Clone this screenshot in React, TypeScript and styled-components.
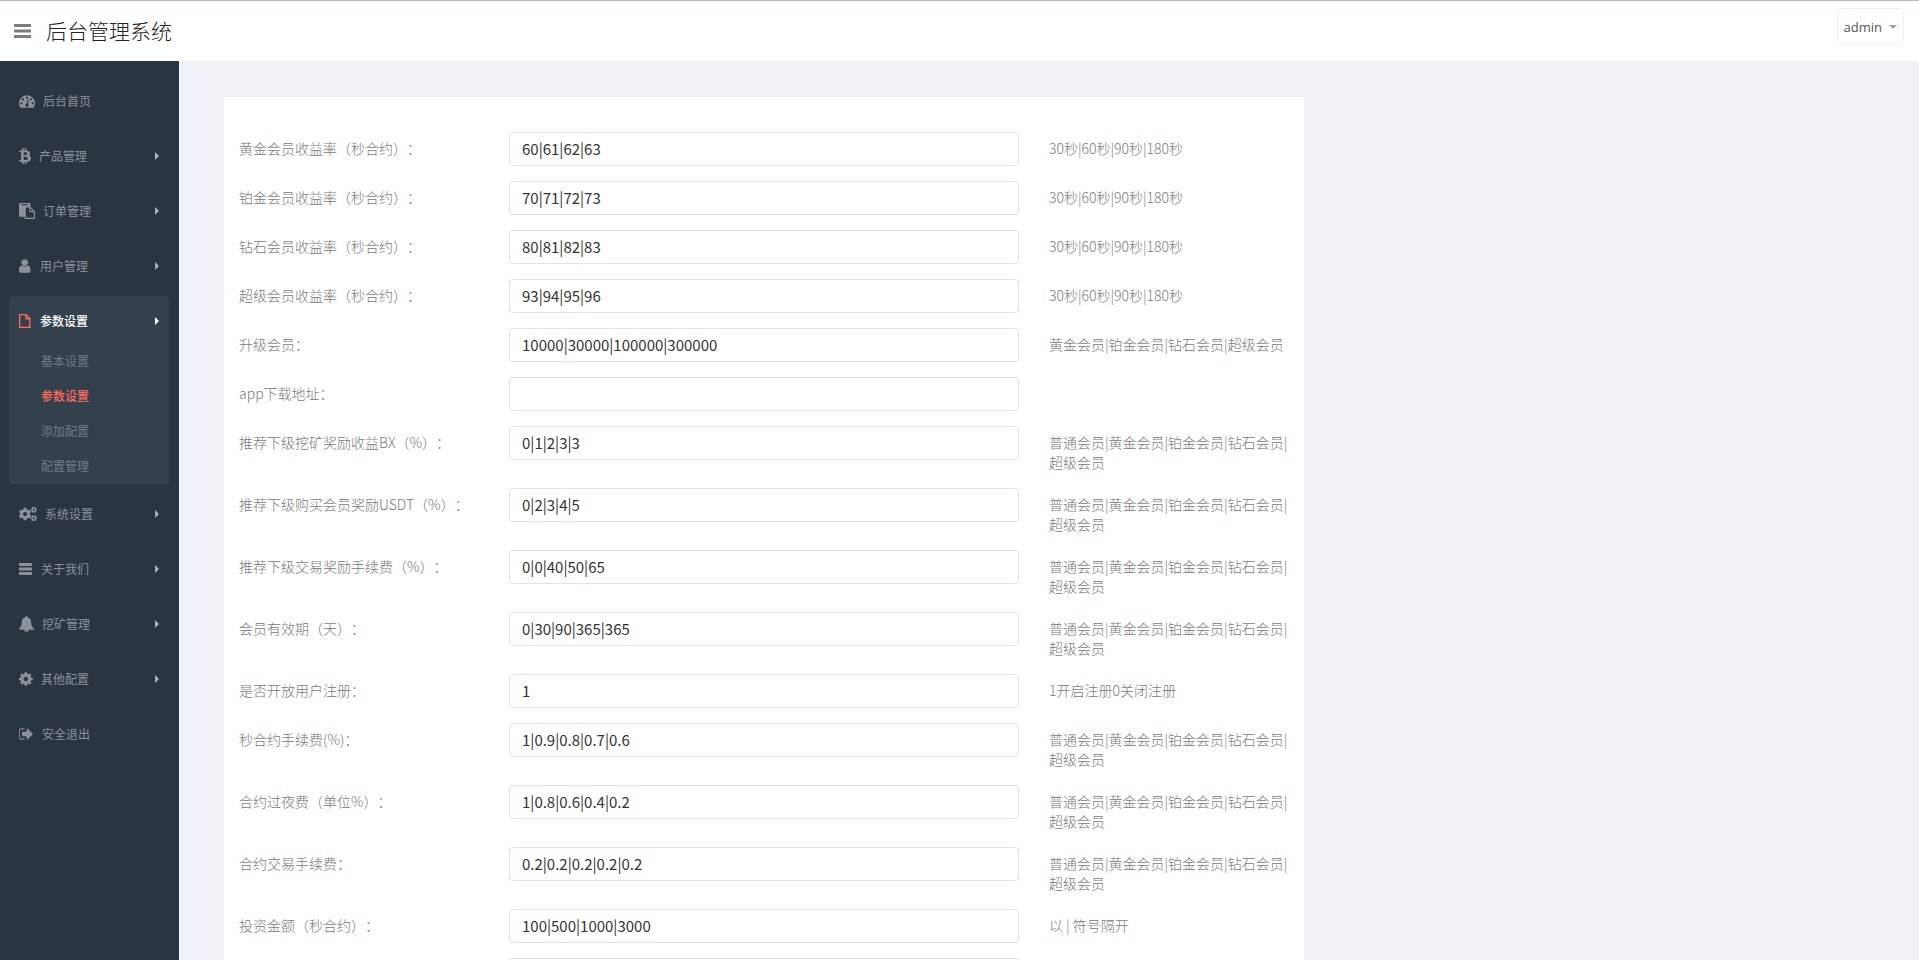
import React from "react";
import styled, { createGlobalStyle, css } from "styled-components";
import { FaBtc, FaCogs } from "react-icons/fa";

const cjk = `"Noto Sans CJK SC", sans-serif`;

const GlobalStyle = createGlobalStyle`
  *, *::before, *::after { box-sizing: border-box; }
  html, body { margin: 0; padding: 0; }
  body {
    background: #f1f2f7;
    color: #797979;
    font-family: ${cjk};
    font-size: 14px;
    line-height: 20px;
    text-spacing-trim: space-all;
  }
  ul { list-style: none; margin: 0; padding: 0; }
  a { color: inherit; text-decoration: none; }
  button { font: inherit; cursor: pointer; }
`;

const Shell = styled.div`
  height: 100vh;
  display: flex;
  flex-direction: column;
`;

const Header = styled.header`
  flex: none;
  height: 61px;
  display: flex;
  align-items: center;
  padding: 0 15px 0 14px;
  background: #fff;
  border-top: 1px solid #bdb5b9;
`;

const MenuButton = styled.button`
  display: flex;
  padding: 0;
  border: 0;
  background: none;
  color: #7c7c7c;
`;

const Brand = styled.a`
  margin-left: 15px;
  padding-bottom: 2px;
  font-size: 21px;
  line-height: 30px;
  font-weight: 300;
  color: #222;
`;

const AccountButton = styled.button`
  align-self: flex-start;
  display: flex;
  align-items: center;
  gap: 7px;
  height: 37px;
  margin: 7px 0 0 auto;
  padding: 0 6px;
  border: 1px solid #f3f3f5;
  border-radius: 4px;
  background: #fff;
  color: #555;
  font-family: "Open Sans", "Noto Sans", sans-serif;
  font-size: 13px;
`;

const Body = styled.div`
  flex: 1;
  min-height: 0;
  display: flex;
`;

const Sidebar = styled.nav`
  flex: none;
  width: 179px;
  padding: 15px 10px 0 9px;
  background: #2a3542;
  font-size: 12px;
`;

const MenuItem = styled.li<{ $open?: boolean }>`
  margin-bottom: 5px;
  border-radius: 4px;
  color: #8b929c;
  ${(p) => p.$open && css`background: #35404d;`}
`;

const MenuLink = styled.a<{ $open?: boolean }>`
  display: flex;
  align-items: center;
  gap: 8px;
  height: 50px;
  padding: 0 10px;
  ${(p) => p.$open && css`
    color: #fff;
    font-weight: 500;
    & > svg:first-child { color: #ff6c60; }
  `}
`;

const BitcoinIcon = styled(FaBtc)`
  width: 12px;
  height: 16px;
`;

const CogsIcon = styled(FaCogs)`
  width: 18px;
  height: 16px;
`;

const Arrow = styled.svg`
  margin-left: auto;
  color: #aeb2b7;
  ${MenuItem} a[aria-expanded="true"] & { color: #fff; }
`;

const SubMenu = styled.ul`
  margin-top: -3px;
  padding-bottom: 1px;
`;

const SubLink = styled.a<{ $active?: boolean }>`
  display: flex;
  align-items: center;
  height: 35px;
  padding-left: 32px;
  color: ${(p) => (p.$active ? "#ff6c60" : "#6f7a85")};
  font-weight: ${(p) => (p.$active ? 500 : 400)};
`;

const Main = styled.main`
  flex: 1;
  min-width: 0;
  overflow-y: auto;
  scrollbar-width: none;
  display: grid;
  grid-template-columns: repeat(12, minmax(0, 1fr));
  column-gap: 30px;
  align-items: start;
  padding: 36px 60px 36px 45px;
`;

const Panel = styled.form`
  grid-column: span 8;
  padding: 35px 0 20px;
  background: #fff;
`;

const Row = styled.div`
  display: grid;
  grid-template-columns: 1fr 2fr 1fr;
  align-items: start;
  margin-bottom: 15px;
`;

const Label = styled.label`
  padding: 6px 15px 1px;
  font-weight: 300;
`;

const Field = styled.div`
  display: flex;
  padding: 0 15px;
`;

const TextInput = styled.input`
  width: 100%;
  min-width: 0;
  height: 34px;
  padding: 0 12px 2px;
  border: 1px solid #e2e2e4;
  border-radius: 4px;
  background: #fff;
  color: #333;
  font-family: ${cjk};
  font-size: 15px;
  outline: none;
`;

const Hint = styled.p`
  margin: 0;
  padding: 6px 15px 1px;
  font-weight: 300;
`;

type GlyphProps = { d: string; x?: number; width: number };

const Glyph = ({ d, x = 0, width }: GlyphProps) => (
  <svg width={width} height={16} viewBox={`${x} 0 ${width * 112} 1792`} fill="currentColor" aria-hidden="true">
    <path d={d} />
  </svg>
);

const paths = {
  gauge:
    "M384 1152q0-53-37.5-90.5t-90.5-37.5-90.5 37.5-37.5 90.5 37.5 90.5 90.5 37.5 90.5-37.5 37.5-90.5zm192-448q0-53-37.5-90.5t-90.5-37.5-90.5 37.5-37.5 90.5 37.5 90.5 90.5 37.5 90.5-37.5 37.5-90.5zm428 481l101-382q6-26-7.5-48.5t-38.5-29.5-48 6.5-30 39.5l-101 382q-60 5-107 43.5t-63 98.5q-20 77 20 146t117 89 146-20 89-117q16-60-6-117t-72-91zm660-33q0-53-37.5-90.5t-90.5-37.5-90.5 37.5-37.5 90.5 37.5 90.5 90.5 37.5 90.5-37.5 37.5-90.5zm-640-640q0-53-37.5-90.5t-90.5-37.5-90.5 37.5-37.5 90.5 37.5 90.5 90.5 37.5 90.5-37.5 37.5-90.5zm448 192q0-53-37.5-90.5t-90.5-37.5-90.5 37.5-37.5 90.5 37.5 90.5 90.5 37.5 90.5-37.5 37.5-90.5zm320 448q0 261-141 483-19 29-54 29h-1402q-35 0-54-29-141-221-141-483 0-182 71-348t191-286 286-191 348-71 348 71 286 191 191 286 71 348z",
  paste:
    "M768 1664h896v-640h-416q-40 0-68-28t-28-68v-416h-384v1152zm256-1440v-64q0-13-9.5-22.5t-22.5-9.5h-704q-13 0-22.5 9.5t-9.5 22.5v64q0 13 9.5 22.5t22.5 9.5h704q13 0 22.5-9.5t9.5-22.5zm256 672h299l-299-299v299zm512 128v672q0 40-28 68t-68 28h-960q-40 0-68-28t-28-68v-160h-544q-40 0-68-28t-28-68v-1344q0-40 28-68t68-28h1088q40 0 68 28t28 68v328q21 13 36 28l408 408q28 28 48 76t20 88z",
  user:
    "M1536 1399q0 109-62.5 187t-150.5 78h-854q-88 0-150.5-78t-62.5-187q0-85 8.5-160.5t31.5-152 58.5-131 94-89 134.5-34.5q131 128 313 128t313-128q76 0 134.5 34.5t94 89 58.5 131 31.5 152 8.5 160.5zm-256-887q0 159-112.5 271.5t-271.5 112.5-271.5-112.5-112.5-271.5 112.5-271.5 271.5-112.5 271.5 112.5 112.5 271.5z",
  bell:
    "M912 1696q0-16-16-16-59 0-101.5-42.5t-42.5-101.5q0-16-16-16t-16 16q0 73 51.5 124.5t124.5 51.5q16 0 16-16zm816-288q0 52-38 90t-90 38h-448q0 106-75 181t-181 75-181-75-75-181h-448q-52 0-90-38t-38-90q50-42 91-88t85-119.5 74.5-158.5 50-206 19.5-260q0-152 117-282.5t307-158.5q-8-19-8-39 0-40 28-68t68-28 68 28 28 68q0 20-8 39 190 28 307 158.5t117 282.5q0 139 19.5 260t50 206 74.5 158.5 85 119.5 91 88z",
  cog:
    "M1152 896q0-106-75-181t-181-75-181 75-75 181 75 181 181 75 181-75 75-181zm512-109v222q0 12-8 23t-20 13l-185 28q-19 54-39 91 35 50 107 138 10 12 10 25t-9 23q-27 37-99 108t-94 71q-12 0-26-9l-138-108q-44 23-91 38-16 136-29 186-7 28-36 28h-222q-14 0-24.5-8.5t-11.5-21.5l-28-184q-49-16-90-37l-141 107q-10 9-25 9-14 0-25-11-126-114-165-168-7-10-7-23 0-12 8-23 15-21 51-66.5t54-70.5q-27-50-41-99l-183-27q-13-2-21-12.5t-8-23.5v-222q0-12 8-23t19-13l186-28q14-46 39-92-40-57-107-138-10-12-10-24 0-10 9-23 26-36 98.5-107.5t94.5-71.5q13 0 26 10l138 107q44-23 91-38 16-136 29-186 7-28 36-28h222q14 0 24.5 8.5t11.5 21.5l28 184q49 16 90 37l142-107q9-9 24-9 13 0 25 10 129 119 165 170 7 8 7 22 0 12-8 23-15 21-51 66.5t-54 70.5q26 50 41 98l183 28q13 2 21 12.5t8 23.5z",
  exit:
    "M704 1440q0 4 1 20t.5 26.5-3 23.5-10 19.5-20.5 6.5h-320q-119 0-203.5-84.5t-84.5-203.5v-704q0-119 84.5-203.5t203.5-84.5h320q13 0 22.5 9.5t9.5 22.5q0 4 1 20t.5 26.5-3 23.5-10 19.5-20.5 6.5h-320q-66 0-113 47t-47 113v704q0 66 47 113t113 47h312l11.5 1 11.5 3 8 5.5 7 9 2 13.5zm928-544q0 26-19 45l-544 544q-19 19-45 19t-45-19-19-45v-288h-448q-26 0-45-19t-19-45v-384q0-26 19-45t45-19h448v-288q0-26 19-45t45-19 45 19l544 544q19 19 19 45z",
};

const Bars = ({ width, height, box = width }: { width: number; height: number; box?: number }) => (
  <svg width={box} height={height} viewBox={`0 0 ${box} ${height}`} fill="currentColor" aria-hidden="true">
    {[0, 1, 2].map((i) => (
      <rect key={i} y={(i * (height - 3)) / 2} width={width} height="3" rx="0.5" />
    ))}
  </svg>
);

const FileOutline = () => (
  <svg width="13" height="14" viewBox="0 0 13 14" fill="none" stroke="currentColor" strokeWidth="1.3" aria-hidden="true">
    <path d="M.65 .65h6.4l3.8 3.8v8.9H.65z" />
    <path d="M6.9 .65v4.1h4" />
  </svg>
);

type Item = { text: string; icon: React.ReactNode; leaf?: boolean; children?: string[] };

const menu: Item[] = [
  { text: "后台首页", leaf: true, icon: <Glyph d={paths.gauge} width={16} /> },
  { text: "产品管理", icon: <BitcoinIcon /> },
  { text: "订单管理", icon: <Glyph d={paths.paste} width={16} /> },
  { text: "用户管理", icon: <Glyph d={paths.user} x={256} width={13} /> },
  {
    text: "参数设置",
    icon: <FileOutline />,
    children: ["基本设置", "参数设置", "添加配置", "配置管理"],
  },
  { text: "系统设置", icon: <CogsIcon /> },
  { text: "关于我们", icon: <Bars width={13} height={12} box={14} /> },
  { text: "挖矿管理", icon: <Glyph d={paths.bell} x={64} width={15} /> },
  { text: "其他配置", icon: <Glyph d={paths.cog} x={128} width={14} /> },
  { text: "安全退出", leaf: true, icon: <Glyph d={paths.exit} x={96} width={15} /> },
];

const levels = "普通会员|黄金会员|铂金会员|钻石会员|超级会员";
const seconds = "30秒|60秒|90秒|180秒";

const rows: [string, string, string][] = [
  ["黄金会员收益率（秒合约）：", "60|61|62|63", seconds],
  ["铂金会员收益率（秒合约）：", "70|71|72|73", seconds],
  ["钻石会员收益率（秒合约）：", "80|81|82|83", seconds],
  ["超级会员收益率（秒合约）：", "93|94|95|96", seconds],
  ["升级会员：", "10000|30000|100000|300000", "黄金会员|铂金会员|钻石会员|超级会员"],
  ["app下载地址：", "", ""],
  ["推荐下级挖矿奖励收益BX（%）：", "0|1|2|3|3", levels],
  ["推荐下级购买会员奖励USDT（%）：", "0|2|3|4|5", levels],
  ["推荐下级交易奖励手续费（%）：", "0|0|40|50|65", levels],
  ["会员有效期（天）：", "0|30|90|365|365", levels],
  ["是否开放用户注册：", "1", "1开启注册0关闭注册"],
  ["秒合约手续费(%)：", "1|0.9|0.8|0.7|0.6", levels],
  ["合约过夜费（单位%）：", "1|0.8|0.6|0.4|0.2", levels],
  ["合约交易手续费：", "0.2|0.2|0.2|0.2|0.2", levels],
  ["投资金额（秒合约）：", "100|500|1000|3000", "以 | 符号隔开"],
  ["", "", ""],
];

export default function App() {
  return (
    <Shell>
      <GlobalStyle />
      <Header>
        <MenuButton type="button" aria-label="菜单">
          <Bars width={17} height={14} />
        </MenuButton>
        <Brand href="#">后台管理系统</Brand>
        <AccountButton type="button">
          admin
          <svg width="8" height="4" viewBox="0 0 8 4" fill="#a3a3ad" aria-hidden="true">
            <path d="M0 0h8L4 4z" />
          </svg>
        </AccountButton>
      </Header>
      <Body>
        <Sidebar>
          <ul>
            {menu.map((item) => {
              const open = !!item.children;
              return (
                <MenuItem key={item.text} $open={open}>
                  <MenuLink href="#" $open={open} aria-expanded={item.leaf ? undefined : open}>
                    {item.icon}
                    {item.text}
                    {!item.leaf && (
                      <Arrow width="4" height="8" viewBox="0 0 4 8" fill="currentColor" aria-hidden="true">
                        <path d="M0 0l4 4-4 4z" />
                      </Arrow>
                    )}
                  </MenuLink>
                  {item.children && (
                    <SubMenu>
                      {item.children.map((text) => (
                        <li key={text}>
                          <SubLink href="#" $active={text === item.text}>
                            {text}
                          </SubLink>
                        </li>
                      ))}
                    </SubMenu>
                  )}
                </MenuItem>
              );
            })}
          </ul>
        </Sidebar>
        <Main>
          <Panel>
            {rows.map(([label, value, hint], i) => (
              <Row key={i}>
                <Label htmlFor={`param-${i}`}>{label}</Label>
                <Field>
                  <TextInput id={`param-${i}`} type="text" defaultValue={value} />
                </Field>
                <Hint>{hint}</Hint>
              </Row>
            ))}
          </Panel>
        </Main>
      </Body>
    </Shell>
  );
}
